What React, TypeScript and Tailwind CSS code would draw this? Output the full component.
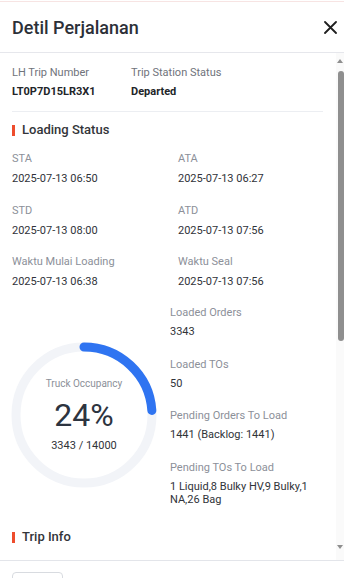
import React from "react";

const font = { fontFamily: "Roboto, 'Noto Sans', Arial, sans-serif" };

function Field({ label, value, gap = 4 }: { label: string; value: string; gap?: number }) {
  return (
    <div>
      <div className="text-[11px] leading-[16px] text-[#8c9099]">{label}</div>
      <div
        className={
          (gap === 5 ? "mt-[5px] " : "mt-[4px] ") + "text-[11px] leading-[14px] text-[#303339]"
        }
      >
        {value}
      </div>
    </div>
  );
}

function Heading({ children }: { children: React.ReactNode }) {
  return (
    <div className="flex items-center h-[20px]">
      <div className="w-[3px] h-[11px] bg-[#ee4d2d] mr-[7px]" />
      <div className="text-[13px] font-medium text-[#333539]">{children}</div>
    </div>
  );
}

function Gauge() {
  const r = 68;
  const c = 2 * Math.PI * r;
  const pct = 3343 / 14000;
  return (
    <div className="relative w-[148px] h-[148px] -ml-[2px]">
      <svg width="148" height="148" viewBox="0 0 148 148">
        <circle cx="74" cy="74" r={r} fill="none" stroke="#f2f4f8" strokeWidth="9" />
        <circle
          cx="74"
          cy="74"
          r={r}
          fill="none"
          stroke="#2f74f1"
          strokeWidth="9"
          strokeLinecap="round"
          strokeDasharray={`${c * pct} ${c}`}
          transform="rotate(-90 74 74)"
        />
      </svg>
      <div className="absolute inset-0 flex flex-col items-center justify-center">
        <div className="text-[10px] leading-[14px] text-[#8c9099]">Truck Occupancy</div>
        <div className="mt-[6px] text-[32px] leading-[36px] text-[#2d3440]">24%</div>
        <div className="mt-[5px] text-[11px] leading-[16px] text-[#303339]">3343 / 14000</div>
      </div>
    </div>
  );
}

export default function App() {
  return (
    <div className="w-[344px] h-[578px] bg-white flex flex-col overflow-hidden" style={font}>
      <div className="h-[2px] flex flex-col">
        <div className="h-px bg-white" />
        <div className="h-px bg-[#f7e4e3]" />
      </div>
      <div className="h-[51px] border-b border-[#e6e7ec] flex items-center justify-between pl-3 pr-[7px]">
        <div className="text-[18px] font-medium text-[#2c3038]">Detil Perjalanan</div>
        <svg width="13" height="13" viewBox="0 0 13 13">
          <path d="M1 1 L12 12 M12 1 L1 12" stroke="#1f1f1f" strokeWidth="1.8" strokeLinecap="round" />
        </svg>
      </div>
      <div className="flex flex-1 min-h-0">
        <div className="flex-1 overflow-hidden pl-3 pr-[13px] pt-[12px]">
          <div className="grid grid-cols-[119px_1fr]">
            <div>
              <div className="text-[11px] leading-[16px] text-[#6f737b]">LH Trip Number</div>
              <div className="mt-[3px] text-[11px] leading-[16px] font-bold text-[#222529]">LT0P7D15LR3X1</div>
            </div>
            <div>
              <div className="text-[11px] leading-[16px] text-[#6f737b]">Trip Station Status</div>
              <div className="mt-[3px] text-[11px] leading-[16px] font-bold text-[#222529]">Departed</div>
            </div>
          </div>
          <div className="mt-[11px] h-px bg-[#eceef2]" />
          <div className="mt-[8px]">
            <Heading>Loading Status</Heading>
          </div>
          <div className="mt-[11px] grid grid-cols-[166px_1fr] gap-y-[16.5px]">
            <Field gap={5} label="STA" value="2025-07-13 06:50" />
            <Field gap={5} label="ATA" value="2025-07-13 06:27" />
            <Field gap={5} label="STD" value="2025-07-13 08:00" />
            <Field gap={5} label="ATD" value="2025-07-13 07:56" />
            <Field gap={5} label="Waktu Mulai Loading" value="2025-07-13 06:38" />
            <Field gap={5} label="Waktu Seal" value="2025-07-13 07:56" />
          </div>
          <div className="mt-[16px] flex">
            <div className="w-[158px] pt-[36px]">
              <Gauge />
            </div>
            <div className="flex-1 flex flex-col gap-[17.5px]">
              <Field label="Loaded Orders" value="3343" />
              <Field label="Loaded TOs" value="50" />
              <Field label="Pending Orders To Load" value="1441 (Backlog: 1441)" />
              <div>
                <div className="text-[11px] leading-[16px] text-[#8c9099]">Pending TOs To Load</div>
                <div className="mt-[4.5px] text-[11px] leading-[13px] text-[#303339]">
                  1 Liquid,8 Bulky HV,9 Bulky,1 NA,26 Bag
                </div>
              </div>
            </div>
          </div>
          <div className="mt-[21px]">
            <Heading>Trip Info</Heading>
          </div>
        </div>
        <div className="w-[8px] bg-[#fafafa] flex flex-col items-end">
          <div className="mt-[6px] mr-[1px] w-0 h-0 border-l-[3px] border-r-[3px] border-b-[4px] border-l-transparent border-r-transparent border-b-[#8f8f8f]" />
          <div className="mt-[8px] w-[6px] h-[270px] rounded-[3px] bg-[#8f8f8f]" />
          <div className="flex-1" />
          <div className="mb-[11px] mr-[1px] w-0 h-0 border-l-[3px] border-r-[3px] border-t-[4px] border-l-transparent border-r-transparent border-t-[#8f8f8f]" />
        </div>
      </div>
      <div className="h-[18px] border-t border-[#e3e5ea] pt-[11px] pl-3 overflow-hidden">
        <div className="w-[51px] h-[30px] rounded-[4px] border border-[#d8dbe0] bg-white" />
      </div>
    </div>
  );
}
